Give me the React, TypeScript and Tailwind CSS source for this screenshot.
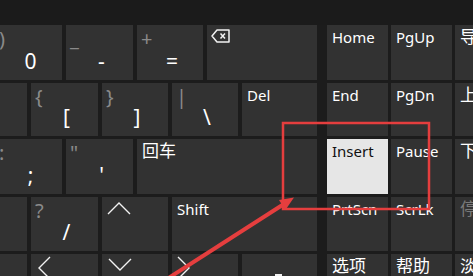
import React from "react";

type KeyProps = {
  w: string;
  label?: string;
  cjk?: boolean;
  dim?: boolean;
  sec?: string;
  main?: string;
  active?: boolean;
  children?: React.ReactNode;
};

const Key = ({ w, label, cjk, dim, sec, main, active, children }: KeyProps) => (
  <div
    className={
      "shrink-0 h-full flex flex-col overflow-hidden " +
      w +
      (active ? " bg-[#e6e6e6] text-[#111]" : " bg-[#323232] text-white")
    }
  >
    {label && (
      <div
        className={
          "pl-[5px] whitespace-nowrap " +
          (cjk ? "pt-[3px] text-[17px] leading-[17px]" : "pt-[5px] text-[15px] leading-[15px]") +
          (dim ? " text-[#7a7a7a]" : "")
        }
      >
        {label}
      </div>
    )}
    {sec && (
      <div className="pl-[4px] pt-[4px] text-[20px] leading-[20px] text-[#8a8a8a]">
        {sec}
      </div>
    )}
    {children}
    {main && (
      <div className="mt-auto pb-[9px] pl-[4px] text-center text-[21px] leading-[20px]">
        {main}
      </div>
    )}
  </div>
);

const Chevron = ({ pts, w, h, cls }: { pts: string; w: number; h: number; cls: string }) => (
  <div className={cls}>
    <svg width={w} height={h} viewBox={`0 0 ${w} ${h}`} fill="none">
      <polyline points={pts} stroke="#f2f2f2" strokeWidth="1.4" />
    </svg>
  </div>
);

const Row = ({ h, left, right }: { h: string; left: React.ReactNode; right: React.ReactNode }) => (
  <div className={"flex shrink-0 " + h}>
    <div className="w-[317px] shrink-0 flex justify-end gap-[4px] overflow-hidden">{left}</div>
    <div className="ml-[10px] shrink-0 flex gap-[3px]">{right}</div>
  </div>
);

export default function App() {
  return (
    <div className="relative w-[473px] h-[276px] overflow-hidden bg-[#1c1c1c] font-['Noto_Sans','Noto_Sans_CJK_SC',sans-serif]">
      <div className="h-[25px] bg-[#1b1b1b]" />
      <div className="flex flex-col gap-[3px]">
        <Row
          h="h-[55px]"
          left={
            <>
              <Key w="w-[67px]" sec=")" main="0" />
              <Key w="w-[67px]" sec="_" main="-" />
              <Key w="w-[66px]" sec="+" main="=" />
              <Key w="w-[110px]">
                <div className="pl-[4px] pt-[4px]">
                  <svg width="19" height="14" viewBox="0 0 19 14" fill="none">
                    <path d="M6 1H18V13H6L1 7Z" stroke="#f2f2f2" strokeWidth="1.5" strokeLinejoin="round" />
                    <path d="M9.5 4.5L14 9.5M14 4.5L9.5 9.5" stroke="#f2f2f2" strokeWidth="1.5" />
                  </svg>
                </div>
              </Key>
            </>
          }
          right={
            <>
              <Key w="w-[61px]" label="Home" />
              <Key w="w-[61px]" label="PgUp" />
              <Key w="w-[61px]" label="导航" cjk />
            </>
          }
        />
        <Row
          h="h-[53px]"
          left={
            <>
              <Key w="w-[67px]" />
              <Key w="w-[67px]" sec="{" main="[" />
              <Key w="w-[66px]" sec="}" main="]" />
              <Key w="w-[66px]" sec="|" main="\" />
              <Key w="w-[75px]" label="Del" />
            </>
          }
          right={
            <>
              <Key w="w-[61px]" label="End" />
              <Key w="w-[61px]" label="PgDn" />
              <Key w="w-[61px]" label="上移" cjk />
            </>
          }
        />
        <Row
          h="h-[55px]"
          left={
            <>
              <Key w="w-[67px]" sec=":" main=";" />
              <Key w="w-[67px]" sec={'"'} main="'" />
              <Key w="w-[180px]" label="回车" cjk />
            </>
          }
          right={
            <>
              <Key w="w-[61px]" label="Insert" active />
              <Key w="w-[61px]" label="Pause" />
              <Key w="w-[61px]" label="下移" cjk />
            </>
          }
        />
        <Row
          h="h-[54px]"
          left={
            <>
              <Key w="w-[67px]" />
              <Key w="w-[67px]" sec="?" main="/" />
              <Key w="w-[66px]">
                <Chevron cls="pl-[5px] pt-[4px]" w={24} h={14} pts="1,13 12,2 23,13" />
              </Key>
              <Key w="w-[145px]" label="Shift" />
            </>
          }
          right={
            <>
              <Key w="w-[61px]" label="PrtScn" />
              <Key w="w-[61px]" label="ScrLk" />
              <Key w="w-[61px]" label="停靠" cjk dim />
            </>
          }
        />
        <Row
          h="h-[55px]"
          left={
            <>
              <Key w="w-[67px]" />
              <Key w="w-[67px]">
                <Chevron cls="pl-[6px] pt-[2px]" w={14} h={24} pts="13,1 2,12 13,23" />
              </Key>
              <Key w="w-[66px]">
                <Chevron cls="pl-[6px] pt-[4px]" w={24} h={14} pts="1,1 12,12 23,1" />
              </Key>
              <Key w="w-[66px]">
                <Chevron cls="pl-[5px] pt-[2px]" w={14} h={24} pts="1,1 12,12 1,23" />
              </Key>
              <Key w="w-[75px]">
                <div className="pl-[33px] pt-[20px]">
                  <div className="w-[7px] h-[3px] bg-[#f2f2f2]" />
                </div>
              </Key>
            </>
          }
          right={
            <>
              <Key w="w-[61px]" label="选项" cjk />
              <Key w="w-[61px]" label="帮助" cjk />
              <Key w="w-[61px]" label="淡化" cjk />
            </>
          }
        />
      </div>

      {/* red annotation */}
      <svg className="absolute inset-0 pointer-events-none" width="473" height="276" viewBox="0 0 473 276">
        <rect x="283" y="123" width="146" height="86" fill="none" stroke="#e53e3e" strokeWidth="2.5" />
        <line x1="167" y1="279" x2="284" y2="204" stroke="#e53e3e" strokeWidth="4" />
        <polygon points="294,197.5 285.4,210.1 279,199.9" fill="#e53e3e" />
      </svg>
    </div>
  );
}
